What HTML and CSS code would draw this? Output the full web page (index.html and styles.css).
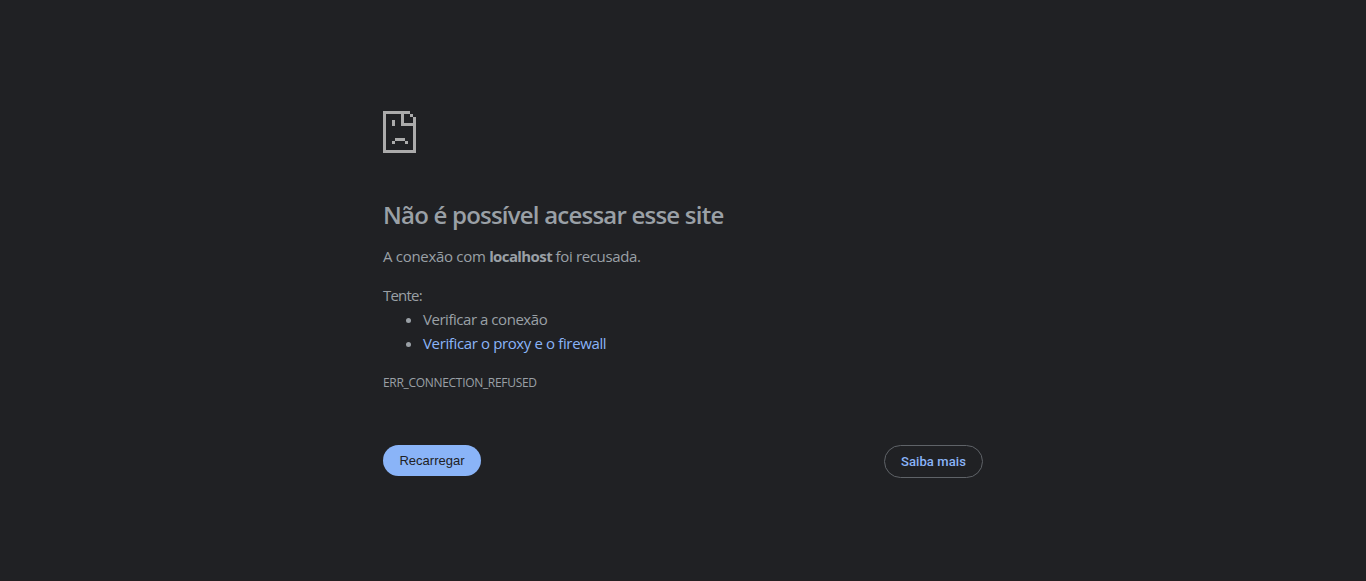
FILE: index.html
```html
<!DOCTYPE html>
<html lang="pt-BR">
<head>
<meta charset="utf-8">
<title>localhost</title>
<link rel="stylesheet" href="styles.css">
</head>
<body>
<main class="interstitial">
  <svg class="icon" width="33" height="42" viewBox="0 0 33 42" fill="currentColor" shape-rendering="crispEdges" aria-hidden="true">
    <path d="M0 0H27V3H30V6H33V42H0ZM3 3V39H30V15H18V3ZM21 3V12H30V6H27V3Z" fill-rule="evenodd"/>
    <path d="M9 9h3v6H9zM12 27h10v3H12zM9 30h3v3H9zM22 30h3v3h-3z"/>
  </svg>
  <h1 class="title">Não é possível acessar esse site</h1>
  <p class="summary">A conexão com <strong>localhost</strong><span class="tail"> foi recusada.</span></p>
  <div class="suggestions">
    <p class="try">Tente:</p>
    <ul class="list">
      <li class="check">Verificar a conexão</li>
      <li><a class="link" href="#">Verificar o proxy e o firewall</a></li>
    </ul>
  </div>
  <div class="code">ERR_CONNECTION_REFUSED</div>
  <div class="buttons">
    <button class="button primary">Recarregar</button>
    <button class="button secondary">Saiba mais</button>
  </div>
</main>
</body>
</html>
```
FILE: styles.css
```css
body {
  margin: 0;
  height: 580px;
  overflow: hidden;
  background: #202124;
  color: #9aa0a6;
  font: 15px/24px "Open Sans", "Noto Sans", sans-serif;
  border-bottom: 1px solid #231f21;
}
.interstitial {
  width: 600px;
  margin: 0 auto;
  padding-top: 111px;
}
.icon {
  display: block;
  color: #ababab;
}
.title {
  margin: 47px 0 15px;
  font-size: 24px;
  line-height: 29px;
  font-weight: 600;
  letter-spacing: -0.78px;
  white-space: nowrap;
}
.summary {
  margin: 0 0 15px;
  white-space: pre;
  letter-spacing: -0.3px;
}
.summary strong { letter-spacing: -0.6px; }
.summary .tail { letter-spacing: -0.36px; }
.try {
  margin: 0;
  letter-spacing: -0.8px;
}
.list {
  margin: 0;
  padding-left: 40px;
  letter-spacing: -0.37px;
}
.check { letter-spacing: -0.46px; }
.link {
  color: #8ab4f8;
  text-decoration: none;
}
.code {
  margin-top: 16px;
  font-size: 12px;
  letter-spacing: -0.31px;
}
.buttons {
  display: flex;
  justify-content: space-between;
  align-items: flex-start;
  margin-top: 50px;
}
.button {
  box-sizing: border-box;
  padding: 0;
  border-radius: 20px;
  font-size: 13px;
  line-height: 15px;
}
.primary {
  width: 98px;
  height: 31px;
  border: 0;
  background: #8ab4f8;
  color: #202124;
  font-family: "Liberation Sans", Arial, sans-serif;
}
.secondary {
  width: 99px;
  height: 33px;
  border: 1px solid #5f6368;
  background: transparent;
  color: #8ab4f8;
  font-family: Roboto, sans-serif;
  font-weight: 500;
  letter-spacing: 0.1px;
}
```
